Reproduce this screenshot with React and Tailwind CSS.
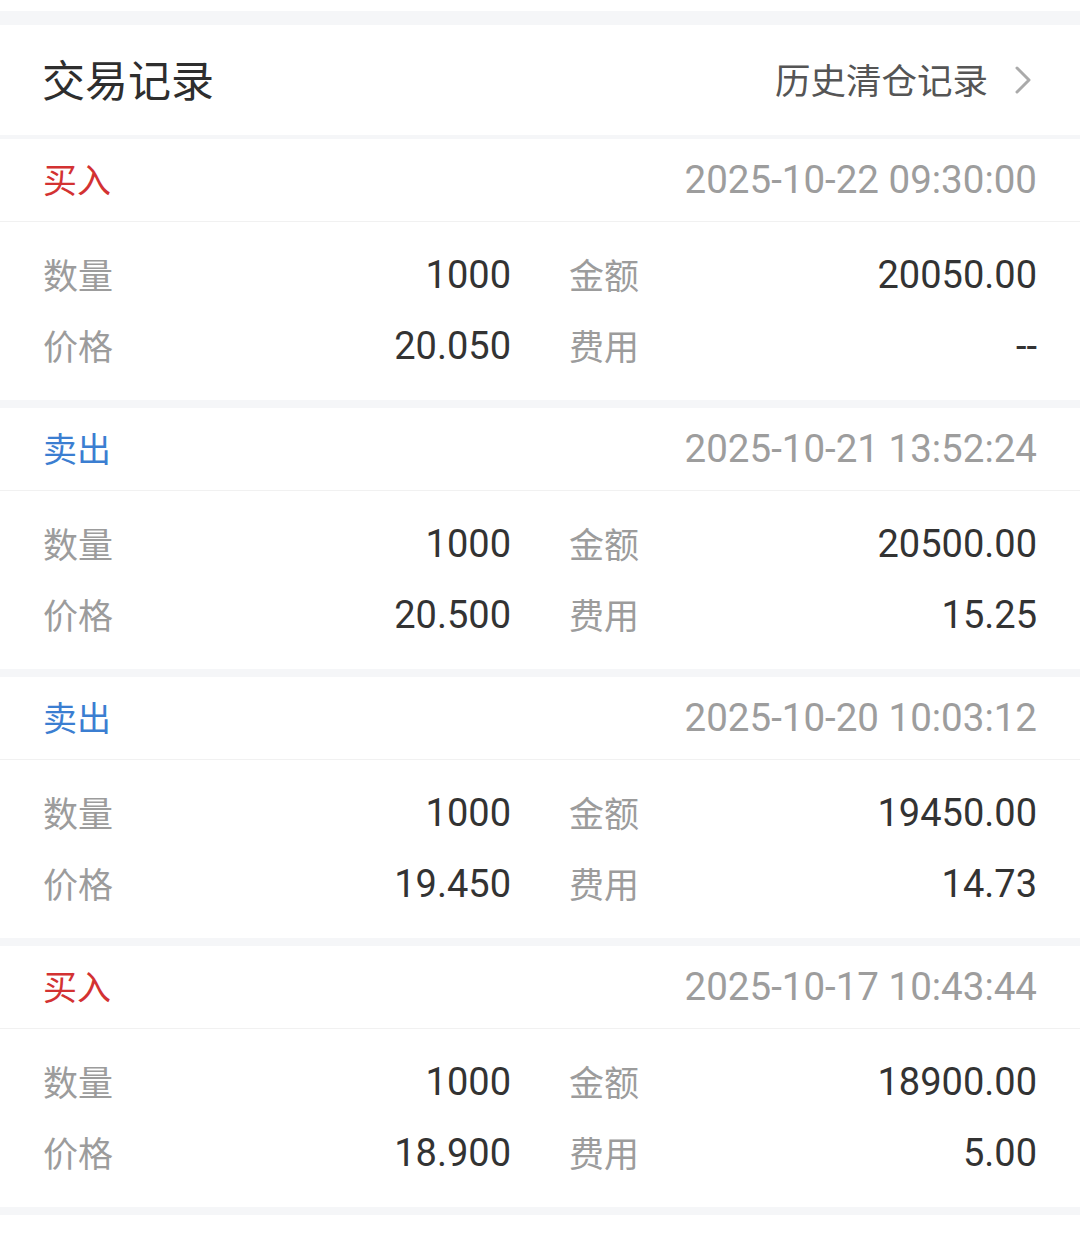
import { useState } from 'react';

const trades = [
  { id: 1, side: 'buy', time: '2025-10-22 09:30:00', qty: '1000', amount: '20050.00', price: '20.050', fee: '--' },
  { id: 2, side: 'sell', time: '2025-10-21 13:52:24', qty: '1000', amount: '20500.00', price: '20.500', fee: '15.25' },
  { id: 3, side: 'sell', time: '2025-10-20 10:03:12', qty: '1000', amount: '19450.00', price: '19.450', fee: '14.73' },
  { id: 4, side: 'buy', time: '2025-10-17 10:43:44', qty: '1000', amount: '18900.00', price: '18.900', fee: '5.00' },
];

const cjk = "font-['Noto_Sans_CJK_SC',sans-serif]";
const num = "font-['Roboto','Noto_Sans_CJK_SC',sans-serif]";

function Cell({ label, value }) {
  return (
    <div className="flex items-center justify-between h-[71px]">
      <span className={`${cjk} text-[35px] text-[#9c9c9c] leading-none -mt-[3px]`}>{label}</span>
      <span className={`${num} text-[38px] text-[#333333] leading-none`}>{value}</span>
    </div>
  );
}

function TradeCard({ side, time, qty, amount, price, fee }) {
  const isBuy = side === 'buy';
  return (
    <div className="bg-white">
      <div className="flex items-center justify-between h-[83px] px-[43px] border-b border-[#f1f1f1]">
        <span className={`${cjk} text-[34px] leading-none -mt-[2px] ${isBuy ? 'text-[#d33232]' : 'text-[#3b7ed1]'}`}>
          {isBuy ? '买入' : '卖出'}
        </span>
        <span className={`${num} text-[38.5px] leading-none text-[#9d9d9d]`}>{time}</span>
      </div>
      <div className="grid grid-cols-2 gap-x-[58px] px-[43px] pt-[17px] pb-[19px]">
        <Cell label="数量" value={qty} />
        <Cell label="金额" value={amount} />
        <Cell label="价格" value={price} />
        <Cell label="费用" value={fee} />
      </div>
    </div>
  );
}

export default function App() {
  const [list] = useState(trades);

  return (
    <div className="w-[1080px] min-h-[1237px] bg-white pt-[11px]">
      <div className="h-[14px] bg-[#f5f6f8]"></div>
      <div className="flex items-center justify-between h-[110px] pl-[42px] pr-[48px]">
        <span className={`${cjk} text-[43px] leading-none text-[#2e2e2e] -mt-[4px]`}>交易记录</span>
        <button className="flex items-center gap-[26px]">
          <span className={`${cjk} text-[35.5px] leading-none text-[#555555] -mt-[2px]`}>历史清仓记录</span>
          <svg width="18" height="30" viewBox="0 0 18 30" fill="none">
            <path d="M3 3 L15 15 L3 27" stroke="#aaaaaa" strokeWidth="3" strokeLinecap="round" strokeLinejoin="round" />
          </svg>
        </button>
      </div>
      <div className="h-[4px] bg-[#f5f6f8]"></div>
      {list.map(t => (
        <div key={t.id}>
          <TradeCard {...t} />
          <div className="h-[8px] bg-[#f5f6f8]"></div>
        </div>
      ))}
    </div>
  );
}
